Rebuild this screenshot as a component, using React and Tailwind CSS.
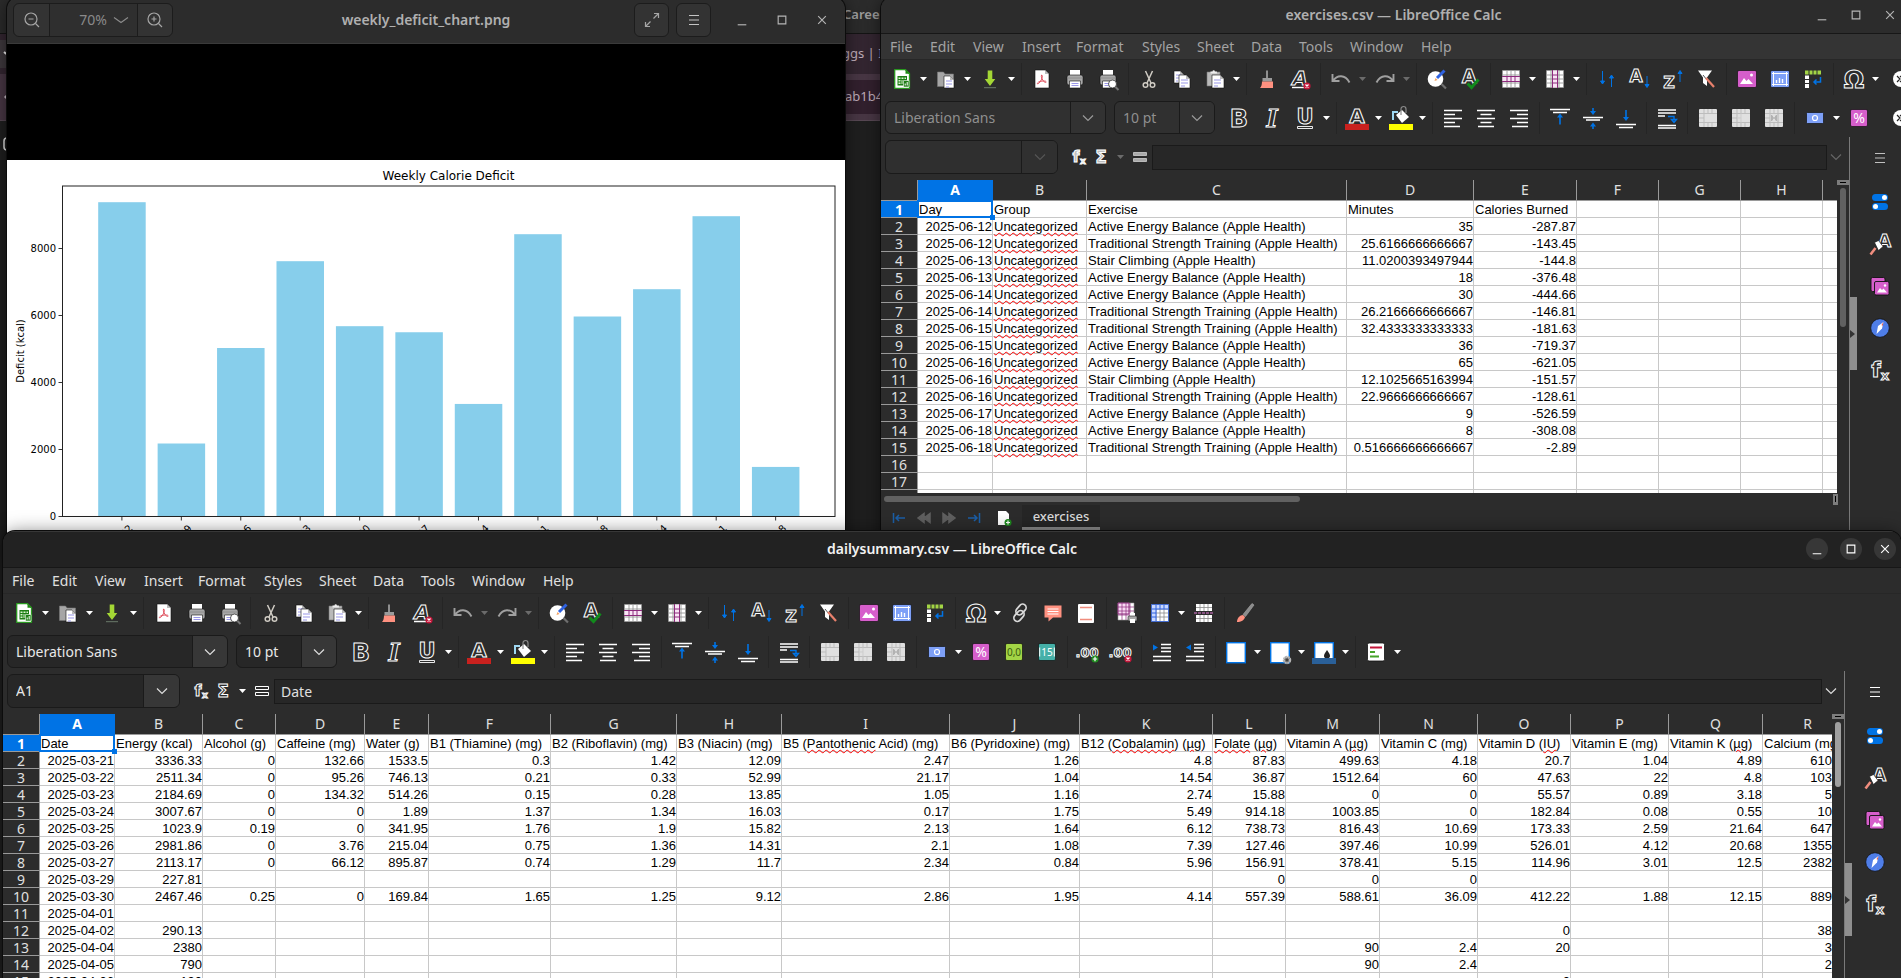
import React from 'react';
import clsx from 'clsx';

const UI = "font-['Noto_Sans',sans-serif]";

/* ---------- icons ---------- */

// hollow letter used by most of the text tools
function Letter({ x = 12, y = 20, size = 22, fill = '#2c2c2c', italic, serif, children }) {
  return (
    <text
      x={x}
      y={y}
      fontSize={size}
      textAnchor="middle"
      fontWeight="700"
      fontStyle={italic ? 'italic' : 'normal'}
      fill={fill}
      stroke="#fff"
      strokeWidth="1"
      className={serif ? "font-['DejaVu_Serif',serif]" : "font-['DejaVu_Sans',sans-serif]"}
    >
      {children}
    </text>
  );
}

const page = (x, y, w, h) => (
  <g>
    <path d={`M${x} ${y}h${w - 4}l4 4v${h - 4}h-${w}z`} fill="#fff" stroke="#111" strokeWidth=".6" />
    <path d={`M${x + w - 4} ${y}v4h4z`} fill="#bbb" />
  </g>
);

const textLines = (x, y, w) => (
  <path d={`M${x} ${y}h${w}M${x} ${y + 3}h${w}M${x} ${y + 6}h${w - 3}`} stroke="#9a97e8" strokeWidth="1.2" />
);

const badge = (kind) => (
  <g>
    <circle cx="19" cy="19" r="3.6" fill={kind === 'plus' ? '#1f8b1f' : '#c4163a'} />
    <path
      d={kind === 'plus' ? 'M16.8 19h4.4M19 16.8v4.4' : 'M17.5 17.5l3 3M20.5 17.5l-3 3'}
      stroke="#fff"
      strokeWidth="1.2"
    />
  </g>
);

const whiteGrid = (
  <g>
    <rect x="3" y="3" width="18" height="18" rx="1" fill="#999" />
    <path d="M4 4h16v16H4z" fill="#fff" />
    <path d="M8 4v16M12 4v16M16 4v16M4 8h16M4 12h16M4 16h16" stroke="#8a8a8a" strokeWidth=".8" />
  </g>
);

const printer = (
  <g>
    <path d="M7 3h10v6H7z" fill="#fff" />
    <rect x="4" y="8" width="16" height="10" rx="2" fill="#a9a9a9" stroke="#111" strokeWidth=".6" />
    <path d="M4 11h16" stroke="#888" strokeWidth=".8" />
    <path d="M6.5 14h11v7h-11z" fill="#fff" stroke="#111" strokeWidth=".6" />
    <path d="M8.5 16.5h7M8.5 18.5h7" stroke="#9a97e8" strokeWidth="1.2" />
  </g>
);

const mergeGrid = (inner) => (
  <g>
    <rect x="3" y="3" width="18" height="18" rx="1" fill="#e0e0e0" />
    <path d="M3 7.5h18M3 16.5h18M8 3v18M12 3v4.5M16 3v4.5M12 16.5V21M16 16.5V21M3 12h5" stroke="#bdbdbd" />
    {inner}
  </g>
);

const upArrow = 'M12 7.5l3 4h-2.2v7h-1.6v-7H9z';

const ICONS = {
  new: (
    <g>
      <path d="M4.7 2.7h10.8l4 4v14.6H4.7z" fill="#fff" stroke="#2a9a20" strokeWidth="1.3" strokeLinejoin="round" />
      <path d="M15.5 2.7v4h4z" fill="#1d8a12" />
      <path d="M7.5 9h9.5v9.5H7.5z" fill="#1d7d14" />
      <path d="M8.5 10.5h2V12h-2zM11.5 10.5h2V12h-2zM14.5 10.5H16V12h-1.5zM8.5 13h2v1.5h-2zM8.5 15.5h2V17h-2zM11.5 13h1v4h-1z" fill="#d9f5d0" />
      <path d="M13.5 13.5H19V20h-5.5z" fill="#1d7d14" stroke="#fff" strokeWidth=".6" />
      <path d="M15.2 18.5v-2M17.2 18.5V15" stroke="#fff" />
    </g>
  ),
  open: (
    <g>
      <path d="M3.5 5h6L11 7h8.5v12.5h-16z" fill="#a6a6a6" stroke="#777" strokeWidth=".6" />
      {page(10, 9, 10, 12)}
      {textLines(12, 14, 6)}
    </g>
  ),
  save: (
    <g>
      <path d="M9.7 3.5h4.6V12h3L12 19l-5.300-7h3z" fill="#a4d735" />
      <path d="M6 20.7h12" stroke="#6a7a6a" />
    </g>
  ),
  pdf: (
    <g>
      {page(5, 3, 14, 18)}
      <path d="M11.5 8c1.5 0 .8 4-1.5 7-1.5 2-3 2.500-2.500 1 .8-1.500 5-2.500 8-1.800 1.500.8.5 1.800-1 .8-2-1.200-3.800-5.500-3-7z" fill="none" stroke="#e0525f" />
    </g>
  ),
  print: printer,
  preview: (
    <g>
      {printer}
      <circle cx="16.5" cy="17" r="4" fill="#fff" stroke="#333" strokeWidth=".8" />
      <path d="M19.5 20l3 3" stroke="#777" strokeWidth="2" />
    </g>
  ),
  cut: (
    <g fill="none" stroke="#d0ccc4" strokeWidth="1.5">
      <path d="M8.5 4L14 16M15.5 4L10 16" />
      <circle cx="8.5" cy="18" r="2.3" />
      <circle cx="15.5" cy="18" r="2.3" />
    </g>
  ),
  copy: (
    <g>
      {page(4, 4, 10, 12)}
      {textLines(6, 8, 5)}
      {page(9, 8, 11, 13)}
      {textLines(11, 13, 7)}
    </g>
  ),
  paste: (
    <g>
      <path d="M4 5h13v14H4z" fill="#b9b9b9" stroke="#777" strokeWidth=".6" />
      <path d="M7.5 6.5v-2h2a1.2 1.2 0 012.4 0h2v2z" fill="#eee" />
      {page(9, 8, 12, 13)}
      {textLines(11, 13, 7)}
    </g>
  ),
  clone: (
    <g>
      <path d="M12 3.5v8" stroke="#8f8f8f" strokeWidth="2" />
      <path d="M7.5 11H17v3.5H7.5z" fill="#9b9b9b" />
      <path d="M7 14.5h11V21H5c1.5-1.5 2-4 2-6.5z" fill="#ff9180" />
    </g>
  ),
  clear: (
    <g>
      <Letter italic size={20} y={18}>A</Letter>
      <path d="M4 20.5h12" stroke="#fff" strokeWidth="1.4" />
      {badge('x')}
    </g>
  ),
  undo: <path d="M3.5 7v7h7M4.2 13.5C8 8 16 7 20.5 15.5" fill="none" stroke="#a0a0a0" strokeWidth="1.9" />,
  redo: <path d="M20.5 7v7h-7M19.8 13.5C16 8 8 7 3.5 15.5" fill="none" stroke="#a0a0a0" strokeWidth="1.9" />,
  find: (
    <g>
      <circle cx="10.5" cy="12" r="7.8" fill="#fff" />
      <path d="M16.5 17l4.5 4.5" stroke="#6f6f6f" strokeWidth="2.2" />
      <path d="M12 11l7.5-7.5" stroke="#2f62e0" strokeWidth="3" />
      <path d="M9.5 14l1-3 2 2z" fill="#f2a15f" />
    </g>
  ),
  spell: (
    <g>
      <Letter size={19} y={16} x={11}>A</Letter>
      <path d="M9.5 16.5l4 4 7-8" fill="none" stroke="#118a1c" strokeWidth="3" />
    </g>
  ),
  row: (
    <g>
      {whiteGrid}
      <path d="M3.5 9.5h17v5h-17z" fill="#f9e4f5" />
      <path d="M3 9.5h18M3 14.5h18M8 9.5v5M12 9.5v5M16 9.5v5" stroke="#8c2a7c" strokeWidth="1" />
    </g>
  ),
  col: (
    <g>
      {whiteGrid}
      <path d="M9.5 3.5h5v17h-5z" fill="#f9e4f5" />
      <path d="M9.5 3v18M14.5 3v18M9.5 8h5M9.5 12h5M9.5 16h5" stroke="#8c2a7c" strokeWidth="1" />
    </g>
  ),
  sort: <path d="M7.5 4v12M5.5 14l2 3 2-3zM16.5 20V9M14.5 11l2-3 2 3z" fill="#0073e5" stroke="#0073e5" strokeWidth="1" />,
  az: (
    <g>
      <Letter size={17} x={8} y={15}>A</Letter>
      <path d="M19 9v10M17 17.5l2 3 2-3z" fill="#0073e5" stroke="#0073e5" strokeWidth="1" />
    </g>
  ),
  za: (
    <g>
      <Letter size={16} x={8} y={21}>Z</Letter>
      <path d="M19 15V5M17 6.5l2-3 2 3z" fill="#0073e5" stroke="#0073e5" strokeWidth="1" />
    </g>
  ),
  filter: (
    <g>
      <path d="M4 3.5h14l-5 7V19l-4-3v-5.5z" fill="#fff" />
      <path d="M9 8l4 5" stroke="#555" />
      <path d="M12 11l8 9" stroke="#e8806c" strokeWidth="2.2" />
    </g>
  ),
  image: (
    <g>
      <rect x="2.5" y="3.5" width="19" height="17" rx="1.5" fill="#d65ecb" stroke="#111" strokeWidth=".7" />
      <path d="M5 17l4-6 2.5 3 2-2 4.5 5z" fill="#fff" />
      <circle cx="16.5" cy="8" r="1.5" fill="#fff" />
    </g>
  ),
  chart: (
    <g>
      <rect x="2.5" y="3.5" width="19" height="17" rx="1.5" fill="#7ea0f7" stroke="#111" strokeWidth=".7" />
      <path d="M5.5 5v14M18.5 5v14M4 6.5h16M4 17.5h16" stroke="#fff" strokeWidth="1" />
      <path d="M8.5 16v-3M11.5 16v-5M14.5 16v-4" stroke="#fff" strokeWidth="1.4" />
    </g>
  ),
  pivot: (
    <g>
      <path d="M4 3.5h16v4H4z" fill="#a3d545" />
      <path d="M8 3v5M12 3v5M16 3v5" stroke="#2c2c2c" />
      <path d="M4 8.5h4V21H4z" fill="#fff" />
      <path d="M4 12.5h4M4 16.5h4" stroke="#2c2c2c" />
      <path d="M19.5 10v5h-6M15.5 12.5L13 15l2.5 2.5" fill="none" stroke="#0073e5" strokeWidth="1.5" />
    </g>
  ),
  omega: <Letter size={24} y={21}>Ω</Letter>,
  link: (
    <g fill="none" stroke="#d8d8d8" strokeWidth="1.7">
      <rect x="9.5" y="2.5" width="7" height="12" rx="3.5" transform="rotate(40 13 8.5)" />
      <rect x="7.5" y="9" width="7" height="12" rx="3.5" transform="rotate(40 11 15)" />
    </g>
  ),
  comment: (
    <g>
      <path d="M3.5 4.5h17v12H12l-4.500 4v-4h-4z" fill="#ff9180" />
      <path d="M6.5 8h11M6.5 10.5h11M6.5 13h11" stroke="#fff" />
    </g>
  ),
  headfoot: (
    <g>
      <rect x="4" y="3" width="16" height="19" rx="1" fill="#fff" />
      <path d="M6 6.5h12M6 18.5h12" stroke="#f08d7e" strokeWidth="1.7" />
    </g>
  ),
  printarea: (
    <g>
      <path d="M3 2h16v17H3z" fill="#fff" stroke="#999" strokeWidth=".6" />
      <path d="M3 2h11v11H3z" fill="#f7d9f2" stroke="#8c2a7c" />
      <path d="M7 2v17M11 2v17M15 2v17M3 6h16M3 10h16M3 14h16" stroke="#8c2a7c" strokeWidth=".7" />
      <path d="M15 12h5v4h-5z" fill="#fff" />
      <rect x="13" y="15" width="9" height="5" rx="1" fill="#a9a9a9" stroke="#222" strokeWidth=".6" />
      <path d="M15 18h5v4h-5z" fill="#fff" />
    </g>
  ),
  freeze: (
    <g>
      {whiteGrid}
      <path d="M4 4h16v4H4zM4 8h4v12H4z" fill="#c9d8ff" />
      <path d="M8 4v16M12 4v4M16 4v4M4 8h16M4 12h4M4 16h4" stroke="#2f62e0" />
      <path d="M3.5 3.5h17v17h-17z" fill="none" stroke="#2f62e0" strokeWidth=".8" />
    </g>
  ),
  split: (
    <g>
      <path d="M4 3h16v7H4zM4 14h16v7H4z" fill="#fff" />
      <path d="M8 3v7M12 3v7M16 3v7M4 6.5h16M8 14v7M12 14v7M16 14v7M4 17.5h16" stroke="#888" strokeWidth=".8" />
      <path d="M2 12h20" stroke="#e27ad6" strokeWidth="1.2" strokeDasharray="3 1" />
    </g>
  ),
  draw: (
    <g>
      <path d="M10 13.5l9-11 2 1.5-8.500 11.500z" fill="#8c8c8c" stroke="#aaa" strokeWidth=".6" />
      <path d="M4 21c0-4 3-7 6-7l2 2c-.5 3-4 5-8 5z" fill="#ff9180" />
    </g>
  ),
  bold: <Letter size={24} y={21}>B</Letter>,
  italic: <Letter size={24} y={21} italic serif>I</Letter>,
  underline: (
    <g>
      <Letter size={21} y={18}>U</Letter>
      <path d="M4.5 20.5h15v2h-15z" fill="#2c2c2c" stroke="#fff" strokeWidth=".9" />
    </g>
  ),
  fontcolor: (
    <g>
      <Letter size={20} y={17}>A</Letter>
      <path d="M0 18h24v6H0z" fill="#c9211e" />
    </g>
  ),
  highlight: (
    <g>
      <path d="M4 14V6h5" fill="none" stroke="#9fd8f2" strokeWidth="2" />
      <path d="M7 9l6-5 7 7-7 6z" fill="#fff" />
      <path d="M12 9V3a2.5 2.5 0 015 0v4" fill="none" stroke="#8a8a8a" strokeWidth="1.2" />
      <path d="M0 18h24v6H0z" fill="#ffff00" />
    </g>
  ),
  left: <path d="M3 4.5h18M3 8.5h11M3 12.5h18M3 16.5h11M3 20.5h16" stroke="#fff" strokeWidth="1.3" />,
  center: <path d="M3 4.5h18M6.5 8.5h11M3 12.5h18M6.5 16.5h11M4 20.5h16" stroke="#fff" strokeWidth="1.3" />,
  right: <path d="M3 4.5h18M10 8.5h11M3 12.5h18M10 16.5h11M5 20.5h16" stroke="#fff" strokeWidth="1.3" />,
  top: (
    <g>
      <path d="M2 3.5h20M5 6.5h14" stroke="#fff" strokeWidth="1.3" />
      <path d={upArrow} fill="#0073e5" />
    </g>
  ),
  middle: (
    <g>
      <path d="M2 11.5h20M5 14h14" stroke="#fff" strokeWidth="1.3" />
      <path d="M11.2 2h1.6v3H15l-3 4-3-4h2.200zM11.200 23h1.600v-2.500H15l-3-4-3 4h2.200z" fill="#0073e5" />
    </g>
  ),
  bottom: (
    <g>
      <path d="M2 18.5h20M5 21.5h14" stroke="#fff" strokeWidth="1.3" />
      <path d="M11.2 4h1.6v7H15l-3 4-3-4h2.200z" fill="#0073e5" />
    </g>
  ),
  wrap: (
    <g>
      <path d="M3 4h18M3 7h18M3 10h7M3 19.5h18M3 22h18" stroke="#fff" strokeWidth="1.3" />
      <path d="M13 10.5h6v4M16.5 13.5l2.5 3 2.5-3z" fill="none" stroke="#0073e5" strokeWidth="1.4" />
    </g>
  ),
  merge: mergeGrid(null),
  mergecells: mergeGrid(<path d="M8 12h4M12 7.5v9" stroke="#cdcdcd" />),
  unmerge: mergeGrid(<path d="M16 7.5v9M9.5 9l2 3-2 3zM14.5 9l-2 3 2 3z" stroke="#b2b2b2" fill="#b2b2b2" />),
  currency: (
    <g>
      <rect x="3.5" y="6.5" width="17" height="11" rx="1" fill="#7ea0f7" stroke="#111" strokeWidth=".7" />
      <circle cx="12" cy="12" r="2.5" fill="none" stroke="#fff" strokeWidth="1.2" />
    </g>
  ),
  percent: (
    <g>
      <rect x="3.5" y="3.5" width="17" height="17" rx="1.5" fill="#d65ecb" stroke="#111" strokeWidth=".7" />
      <text x="12" y="17" fontSize="14" textAnchor="middle" fill="#fff">%</text>
    </g>
  ),
  number: (
    <g>
      <rect x="3.5" y="3.5" width="17" height="17" rx="1.5" fill="#a3d545" stroke="#111" strokeWidth=".7" />
      <text x="12" y="16" fontSize="10" textAnchor="middle" fill="#3c5c10">0,0</text>
    </g>
  ),
  date: (
    <g>
      <rect x="3.5" y="3.5" width="17" height="17" rx="1.5" fill="#45b0a8" stroke="#111" strokeWidth=".7" />
      <text x="12" y="16" fontSize="10" textAnchor="middle" fill="#fff">15</text>
      <path d="M4.7 7.5v9M19.3 7.5v9" stroke="#fff" />
    </g>
  ),
  adddec: (
    <g>
      <Letter x={11} y={17} size={13}>.00</Letter>
      {badge('plus')}
    </g>
  ),
  deldec: (
    <g>
      <Letter x={11} y={17} size={13}>.00</Letter>
      {badge('x')}
    </g>
  ),
  indent: (
    <g>
      <path d="M11 4.5h10M11 8h10M11 11.5h10M3 16.5h18M3 20.5h18" stroke="#fff" strokeWidth="1.5" />
      <path d="M3 4.5l5 3-5 3z" fill="#0073e5" />
    </g>
  ),
  outdent: (
    <g>
      <path d="M11 4.5h10M11 8h10M11 11.5h10M3 16.5h18M3 20.5h18" stroke="#fff" strokeWidth="1.5" />
      <path d="M8 4.5l-5 3 5 3z" fill="#0073e5" />
    </g>
  ),
  border: <rect x="2.7" y="2.7" width="18.6" height="20" fill="#fff" stroke="#0073e5" strokeWidth="1.4" />,
  borderstyle: (
    <g>
      <rect x="2.7" y="2.7" width="18.6" height="20" fill="#fff" stroke="#0073e5" strokeWidth="1.4" />
      <circle cx="19" cy="20" r="3" fill="#444" stroke="#b5b5b5" strokeWidth="2.5" strokeDasharray="2 .4" />
    </g>
  ),
  bordercolor: (
    <g>
      <rect x="2.7" y="2.7" width="18.6" height="18.6" fill="#fff" stroke="#0073e5" strokeWidth="1.4" />
      <path d="M15 10c2 3 3 4.500 3 6s-1 2.500-3 2.500-3-1-3-2.500 1-3 3-6z" fill="#222" />
      <path d="M0 18h24v6H0z" fill="#2a6099" />
    </g>
  ),
  cond: (
    <g>
      <rect x="3.5" y="3" width="17" height="18" rx="1.5" fill="#fff" stroke="#111" strokeWidth=".8" />
      <path d="M6 7.5h12" stroke="#c4163a" strokeWidth="2" />
      <path d="M6 12h5M6 16.5h9" stroke="#47a32a" strokeWidth="2" />
    </g>
  ),
  menu: <path d="M7 7.5h10M7 12h10M7 16.5h10" stroke="currentColor" strokeWidth="1.2" />,
  toggles: (
    <g>
      <rect x="4" y="4" width="16" height="7" rx="3.5" fill="#0073e5" />
      <circle cx="16.5" cy="7.5" r="2.5" fill="#fff" />
      <rect x="4" y="13" width="16" height="7" rx="3.5" fill="#0073e5" />
      <circle cx="7.5" cy="16.5" r="2.5" fill="#fff" />
    </g>
  ),
  styles: (
    <g>
      <Letter x={16.5} y={15} size={17}>A</Letter>
      <path d="M6.5 10.5l4-2 4.5 6-4.500 4z" fill="#fff" stroke="#111" strokeWidth=".6" />
      <path d="M7.5 16l-5 6.5" stroke="#f08d7e" strokeWidth="2.6" />
    </g>
  ),
  gallery: (
    <g fill="#d65ecb" stroke="#111" strokeWidth=".9">
      <rect x="3" y="3.5" width="14" height="14" rx="1.5" />
      <rect x="6.5" y="7.5" width="14.5" height="13.5" rx="1.5" />
      <path d="M9 18.5l3-4.500 2 2 1.500-1.500 3.500 4z" fill="#fff" stroke="none" />
      <circle cx="17" cy="11.5" r="1.2" fill="#fff" stroke="none" />
    </g>
  ),
  compass: (
    <g>
      <circle cx="12" cy="12" r="9.3" fill="#4f7ee8" stroke="#111" strokeWidth=".8" />
      <path d="M10 10l5.500-4L14 12.500 8.500 18z" fill="#fff" />
      <path d="M15.5 6l-2 3 1 1z" fill="#e04a3a" />
    </g>
  ),
  functions: (
    <g>
      <Letter x={8} y={19} size={22}>f</Letter>
      <Letter x={17} y={22} size={13}>x</Letter>
    </g>
  ),
};

function Icon({ name, className = 'w-6 h-6' }) {
  return (
    <svg viewBox="0 0 24 24" className={clsx('shrink-0 overflow-visible', className)} aria-hidden="true">
      {ICONS[name]}
    </svg>
  );
}

function Caret({ dim }) {
  return (
    <svg viewBox="0 0 7 4" className="w-[7px] h-1" aria-hidden="true">
      <path d="M0 0h7L3.5 4z" fill={dim ? '#6b6b6b' : '#fff'} />
    </svg>
  );
}

function Chevron({ className = 'text-[#d0d0d0]' }) {
  return (
    <svg viewBox="0 0 12 8" className={clsx('w-3 h-2', className)} aria-hidden="true">
      <path d="M1 1.5l5 5 5-5" fill="none" stroke="currentColor" strokeWidth="1.2" />
    </svg>
  );
}

/* ---------- toolbars ---------- */

// "+" marks a button with a menu arrow, "|" is a separator
const STANDARD = [
  'new+', 'open+', 'save+', '|', 'pdf', 'print', 'preview', '|', 'cut', 'copy', 'paste+', '|', 'clone', 'clear', '|',
  'undo+', 'redo+', '|', 'find', 'spell', '|', 'row+', 'col+', '|', 'sort', 'az', 'za', 'filter', '|',
  'image', 'chart', 'pivot', '|', 'omega+', 'link', 'comment', 'headfoot', '|', 'printarea', 'freeze+', 'split', '|', 'draw',
];

const FORMATTING = [
  'bold', 'italic', 'underline+', '|', 'fontcolor+', 'highlight+', '|', 'left', 'center', 'right', '|',
  'top', 'middle', 'bottom', '|', 'wrap', '|', 'merge', 'mergecells', 'unmerge', '|',
  'currency+', 'percent', 'number', 'date', '|', 'adddec', 'deldec', '|', 'indent', 'outdent', '|',
  'border+', 'borderstyle+', 'bordercolor+', '|', 'cond+',
];

function Separator() {
  return <span className="w-2 h-8 shrink-0 flex justify-center before:w-px before:h-full before:bg-[#252525]" />;
}

function Tools({ items, last }) {
  const shown = last ? items.slice(0, items.indexOf(last) + 1) : items;
  return (
    <>
      {shown.map((item, i) => {
        if (item === '|') return <Separator key={i} />;
        const name = item.replace('+', '');
        return (
          <React.Fragment key={i}>
            <button aria-label={name} className="w-[33px] h-8 shrink-0 flex items-center justify-center">
              <Icon name={name} />
            </button>
            {item.endsWith('+') && (
              <button aria-label={`${name} options`} className="w-[11px] h-8 shrink-0 flex items-center justify-center">
                <Caret dim={name === 'undo' || name === 'redo'} />
              </button>
            )}
          </React.Fragment>
        );
      })}
      {last && (
        <button aria-label="More" className="ml-auto w-[13px] h-4 shrink-0">
          <svg viewBox="0 0 16 16" className="w-4 h-4" aria-hidden="true">
            <circle cx="8" cy="8" r="8" fill="#fff" />
            <path d="M4 5l3 3-3 3M7 5l3 3-3 3" fill="none" stroke="#222" strokeWidth="1.2" />
          </svg>
        </button>
      )}
    </>
  );
}

function Combo({ label, value, active, className }) {
  return (
    <div
      className={clsx(
        'relative h-[33px] shrink-0 rounded-md border border-[#1a1a1a] overflow-hidden',
        active ? 'bg-[#272727] text-[#e8e8e8]' : 'bg-[#303030] text-[#8f8f8f]',
        className,
      )}
    >
      <select aria-label={label} className="w-full h-full pl-2 appearance-none bg-transparent text-sm outline-none">
        <option>{value}</option>
      </select>
      <span
        className={clsx(
          'absolute inset-y-0 right-0 w-[35px] border-l border-[#1a1a1a] flex items-center justify-center pointer-events-none',
          active ? 'bg-[#373737]' : 'bg-[#323232]',
        )}
      >
        <Chevron className={active ? 'text-[#dcdcdc]' : 'text-[#9a9a9a]'} />
      </span>
    </div>
  );
}

/* ---------- spreadsheet ---------- */

const MISSPELLED = /(Uncategorized|Pantothenic|Cobalamin|Folate|µg|IU)/;

function CellText({ text }) {
  return text.split(MISSPELLED).map((part, i) =>
    i % 2 ? (
      <span key={i} className="underline decoration-wavy decoration-[#ff0000] decoration-1 underline-offset-1">
        {part}
      </span>
    ) : (
      part
    ),
  );
}

function Sheet({ columns, rows, textColumns = [], paddedColumn }) {
  return (
    <div className="flex-1 min-w-0 overflow-hidden">
      <table className="w-max table-fixed border-separate border-spacing-0 bg-white text-black font-['Liberation_Sans',Arial,sans-serif] text-[13px]">
        <colgroup>
          <col className="w-[37px]" />
          {columns.map(([letter, width]) => (
            <col key={letter} className={width} />
          ))}
        </colgroup>
        <thead className={UI}>
          <tr>
            <th aria-label="Select all" className="h-[21px] p-0 bg-[#2c2c2c] border-r border-b border-[#9a9a9a]" />
            {columns.map(([letter], i) => (
              <th
                key={letter}
                scope="col"
                className={clsx(
                  'h-[21px] p-0 border-r border-b border-[#9a9a9a] text-sm leading-5 text-center',
                  i === 0 ? 'bg-[#0073e5] text-white font-bold border-[#0073e5]' : 'bg-[#2c2c2c] text-[#e0e0e0] font-normal',
                )}
              >
                {letter}
              </th>
            ))}
          </tr>
        </thead>
        <tbody>
          {rows.map((row, r) => (
            <tr key={r}>
              <th
                scope="row"
                className={clsx(
                  UI,
                  'h-[17px] p-0 border-r border-b border-[#9a9a9a] text-sm text-center',
                  r === 0 ? 'bg-[#0073e5] text-white font-bold' : 'bg-[#2c2c2c] text-[#e0e0e0] font-normal',
                )}
              >
                <div className="h-4 leading-[18px]">{r + 1}</div>
              </th>
              {columns.map(([letter], c) => {
                const value = row[c] ?? '';
                const left = r === 0 || textColumns.includes(letter);
                return (
                  <td
                    key={letter}
                    className={clsx(
                      'relative h-[17px] py-0 border-r border-b border-[#c8c8c8] whitespace-nowrap',
                      left ? 'pl-px pr-0 text-left' : 'pl-0 text-right',
                      !left && (letter === paddedColumn ? 'pr-5' : 'pr-0'),
                    )}
                  >
                    <div className="h-4 leading-[18px]">
                      <CellText text={value} />
                    </div>
                    {r === 0 && c === 0 && (
                      <span className="absolute -inset-px border-2 border-[#0073e5] after:absolute after:-right-1 after:-bottom-1 after:w-[5px] after:h-[5px] after:bg-[#0073e5] z-10" />
                    )}
                  </td>
                );
              })}
            </tr>
          ))}
        </tbody>
      </table>
    </div>
  );
}

function WindowButtons({ round, className }) {
  const shapes = [
    ['Minimize', 'M7 16.5h9'],
    ['Maximize', 'M7.5 7.5h8v8h-8z'],
    ['Close', 'M7.5 7.5l8 8M15.5 7.5l-8 8'],
  ];
  return (
    <div className={clsx('flex items-center justify-end', className)}>
      {shapes.map(([label, d]) => (
        <button
          key={label}
          aria-label={label}
          className={clsx('w-[22px] h-[22px] rounded-full', round ? 'bg-[#373737] text-white' : 'text-[#b5b5b5]')}
        >
          <svg viewBox="0 0 23 23" className="w-full h-full" aria-hidden="true">
            <path d={d} fill="none" stroke="currentColor" strokeWidth="1.2" />
          </svg>
        </button>
      ))}
    </div>
  );
}

const MENUS = [
  ['File', 'w-10'],
  ['Edit', 'w-[43px]'],
  ['View', 'w-[49px]'],
  ['Insert', 'w-[54px]'],
  ['Format', 'w-[66px]'],
  ['Styles', 'w-[55px]'],
  ['Sheet', 'w-[54px]'],
  ['Data', 'w-12'],
  ['Tools', 'w-[51px]'],
  ['Window', 'w-[71px]'],
  ['Help', 'w-12'],
];

function CalcWindow({ title, active, cell, formula, sheet, lastStandard, lastFormatting, thumb, handle, footer, className }) {
  return (
    <section
      className={clsx(
        UI,
        'absolute flex flex-col overflow-hidden rounded-t-xl bg-[#2c2c2c] shadow-[0_0_0_1px_#0c0c0c,0_3px_20px_rgba(0,0,0,0.6)]',
        className,
      )}
    >
      <header
        className={clsx(
          'h-[37px] shrink-0 grid grid-cols-[1fr_auto_1fr] items-center pb-px border-b border-b-[#171717] border-t border-t-[#373737]',
          active ? 'bg-[#222222] text-[#f2f2f2]' : 'bg-[#2c2c2c] text-[#b0b0b0]',
        )}
      >
        <h1 className="col-start-2 text-sm font-semibold">{title}</h1>
        <WindowButtons round={active} className="gap-3 pr-[5px]" />
      </header>

      <nav
        className={clsx(
          'h-[26px] shrink-0 flex items-center pl-px border-b border-[#272727] text-sm',
          active ? 'bg-[#2c2c2c] text-[#e0e0e0]' : 'bg-[#343434] text-[#a3a3a3]',
        )}
      >
        {MENUS.map(([label, width]) => (
          <button key={label} className={clsx('pl-2 shrink-0 text-left', width)}>
            {label}
          </button>
        ))}
      </nav>

      <div className="h-[38px] shrink-0 flex items-center pl-1">
        <Tools items={STANDARD} last={lastStandard} />
      </div>
      <div className="h-[39px] shrink-0 flex items-center pl-1">
        <Combo label="Font name" value="Liberation Sans" active={active} className="w-[221px]" />
        <Combo label="Font size" value="10 pt" active={active} className="w-[101px] ml-2" />
        <span className="w-[7px] shrink-0" />
        <Tools items={FORMATTING} last={lastFormatting} />
      </div>

      <div className="flex-1 min-h-0 flex">
        <div className="flex-1 min-w-0 flex flex-col">
          <div className="h-[43px] shrink-0 flex items-center pl-1 pb-[3px]">
            <div
              className={clsx(
                'w-[173px] h-[34px] shrink-0 flex rounded-md border border-[#1a1a1a] overflow-hidden',
                active ? 'bg-[#272727]' : 'bg-[#2f2f2f]',
              )}
            >
              <input
                aria-label="Name box"
                defaultValue={cell}
                className="flex-1 min-w-0 pl-2 bg-transparent text-sm text-[#e8e8e8] outline-none"
              />
              <button
                aria-label="Named ranges"
                className={clsx(
                  'w-9 border-l border-[#1a1a1a] flex items-center justify-center',
                  active ? 'bg-[#373737]' : 'bg-[#303030]',
                )}
              >
                <Chevron className={active ? 'text-[#dcdcdc]' : 'text-[#555]'} />
              </button>
            </div>
            <button aria-label="Function wizard" className="ml-[10px] w-[22px] shrink-0 flex justify-center">
              <svg viewBox="0 0 16 16" className="w-4 h-4 overflow-visible" aria-hidden="true">
                <Letter x={5} y={13} size={16} fill={active ? '#2c2c2c' : '#bbb'}>f</Letter>
                <Letter x={12} y={15} size={9} fill={active ? '#2c2c2c' : '#bbb'}>x</Letter>
              </svg>
            </button>
            <button aria-label="Select function" className="w-[22px] shrink-0 flex justify-center">
              <svg viewBox="0 0 16 16" className="w-4 h-4 overflow-visible" aria-hidden="true">
                <Letter x={8} y={14} size={17} fill={active ? '#2c2c2c' : '#bbb'}>Σ</Letter>
              </svg>
            </button>
            <button aria-label="Function menu" className="w-4 shrink-0 flex justify-center">
              <Caret dim={!active} />
            </button>
            <button aria-label="Formula" className="w-6 shrink-0 flex justify-center">
              <svg viewBox="0 0 16 16" className="w-4 h-4" aria-hidden="true">
                <path
                  d="M1.5 3.5h13v3h-13zM1.5 9.5h13v3h-13z"
                  fill={active ? '#2c2c2c' : '#aaa'}
                  stroke={active ? '#fff' : '#bbb'}
                />
              </svg>
            </button>
            <input
              aria-label="Input line"
              defaultValue={formula}
              className="flex-1 min-w-0 h-[25px] pl-1.5 border border-[#1a1a1a] bg-[#272727] text-sm text-[#e0e0e0] outline-none"
            />
            <button aria-label="Expand formula bar" className="w-[18px] mr-1 shrink-0 flex justify-center">
              <Chevron className={active ? 'text-[#dcdcdc]' : 'text-[#666]'} />
            </button>
          </div>

          <div className="flex-1 min-h-0 flex">
            <Sheet {...sheet} />
            <div className="w-3 shrink-0 flex flex-col items-center bg-[#2c2c2c]">
              <span className="w-full h-[5px] bg-[#7d7d7d] flex items-center justify-center before:w-1.5 before:h-px before:bg-black" />
              <span className={clsx('mt-[3px] w-1.5 rounded-full', active ? 'bg-[#a0a0a0]' : 'bg-[#616161]', thumb)} />
            </div>
          </div>
          {footer}
        </div>

        <aside className="relative w-[57px] shrink-0 border-l border-[#7a7a7a] bg-[#2c2c2c]">
          <button
            aria-label="Hide sidebar"
            className={clsx('absolute left-0 w-[7px] h-[73px] bg-[#8f8f8f] flex items-center', handle)}
          >
            <svg viewBox="0 0 5 8" className="w-[5px] h-2" aria-hidden="true">
              <path d="M0 0l5 4-5 4z" fill="#333" />
            </svg>
          </button>
          <div className="pl-1 pt-[9px] flex flex-col items-center">
            <button aria-label="Sidebar settings" className={active ? 'text-white' : 'text-[#c0c0c0]'}>
              <Icon name="menu" />
            </button>
            <div className="pt-5 flex flex-col gap-[18px]">
              {['toggles', 'styles', 'gallery', 'compass', 'functions'].map((name) => (
                <button key={name} aria-label={name} className="h-6">
                  <Icon name={name} />
                </button>
              ))}
            </div>
          </div>
        </aside>
      </div>
    </section>
  );
}

function SheetTabs() {
  const nav = [
    ['First sheet', 'M2.5 3v10M14 8H5M8 5L5 8l3 3', '#1b5fa8', 'none'],
    ['Previous sheet', 'M8 3.5v9L2 8zM14 3.5v9L8 8z', '#606060', '#606060'],
    ['Next sheet', 'M2 3.5v9L8 8zM8 3.5v9L14 8z', '#606060', '#606060'],
    ['Last sheet', 'M13.5 3v10M2 8h9M8 5l3 3-3 3', '#1b5fa8', 'none'],
  ];
  return (
    <div className="shrink-0">
      <div className="h-3 flex justify-between items-center pl-[3px] pr-[11px]">
        <span className="w-[416px] h-1.5 rounded-full bg-[#616161]" />
        <span className="w-[5px] h-[11px] bg-[#7d7d7d] flex justify-center items-center before:w-px before:h-1.5 before:bg-black" />
      </div>
      <div className="h-[25px] flex items-center pl-[5px]">
        {nav.map(([label, d, stroke, fill]) => (
          <button key={label} aria-label={label} className="w-[25px] h-full flex items-center justify-center">
            <svg viewBox="0 0 16 16" className="w-4 h-4" aria-hidden="true">
              <path d={d} stroke={stroke} fill={fill} strokeWidth="1.5" />
            </svg>
          </button>
        ))}
        <button aria-label="Add sheet" className="w-9 h-full flex items-center justify-center">
          <svg viewBox="0 0 16 16" className="w-4 h-4" aria-hidden="true">
            <path d="M2 1h8l3 3v11H2z" fill="#fff" />
            <circle cx="12" cy="12.5" r="3.5" fill="#1f8b1f" />
            <path d="M10 12.5h4M12 10.5v4" stroke="#fff" strokeWidth="1.2" />
          </svg>
        </button>
        <button className="w-[78px] h-full border-b-[3px] border-[#8a8a8a] bg-[#262626] text-[13px] leading-5 font-medium text-[#dcdcdc]">
          exercises
        </button>
      </div>
      <div className="h-7" />
    </div>
  );
}

/* ---------- data ---------- */

const AEB = 'Active Energy Balance (Apple Health)';
const TST = 'Traditional Strength Training (Apple Health)';
const SC = 'Stair Climbing (Apple Health)';
const UN = 'Uncategorized';

const EXERCISES = {
  textColumns: ['B', 'C'],
  columns: [
    ['A', 'w-[75px]'], ['B', 'w-[94px]'], ['C', 'w-[260px]'], ['D', 'w-[127px]'], ['E', 'w-[103px]'],
    ['F', 'w-[82px]'], ['G', 'w-[82px]'], ['H', 'w-[82px]'], ['', 'w-[82px]'],
  ],
  rows: [
    ['Day', 'Group', 'Exercise', 'Minutes', 'Calories Burned'],
    ['2025-06-12', UN, AEB, '35', '-287.87'],
    ['2025-06-12', UN, TST, '25.6166666666667', '-143.45'],
    ['2025-06-13', UN, SC, '11.0200393497944', '-144.8'],
    ['2025-06-13', UN, AEB, '18', '-376.48'],
    ['2025-06-14', UN, AEB, '30', '-444.66'],
    ['2025-06-14', UN, TST, '26.2166666666667', '-146.81'],
    ['2025-06-15', UN, TST, '32.4333333333333', '-181.63'],
    ['2025-06-15', UN, AEB, '36', '-719.37'],
    ['2025-06-16', UN, AEB, '65', '-621.05'],
    ['2025-06-16', UN, SC, '12.1025665163994', '-151.57'],
    ['2025-06-16', UN, TST, '22.9666666666667', '-128.61'],
    ['2025-06-17', UN, AEB, '9', '-526.59'],
    ['2025-06-18', UN, AEB, '8', '-308.08'],
    ['2025-06-18', UN, TST, '0.516666666666667', '-2.89'],
    [], [], [],
  ],
};

const DAILY = {
  paddedColumn: 'R',
  columns: [
    ['A', 'w-[75px]'], ['B', 'w-[88px]'], ['C', 'w-[73px]'], ['D', 'w-[89px]'], ['E', 'w-[64px]'], ['F', 'w-[122px]'],
    ['G', 'w-[126px]'], ['H', 'w-[105px]'], ['I', 'w-[168px]'], ['J', 'w-[130px]'], ['K', 'w-[133px]'], ['L', 'w-[73px]'],
    ['M', 'w-[94px]'], ['N', 'w-[98px]'], ['O', 'w-[93px]'], ['P', 'w-[98px]'], ['Q', 'w-[94px]'], ['R', 'w-[90px]'],
  ],
  rows: [
    ['Date', 'Energy (kcal)', 'Alcohol (g)', 'Caffeine (mg)', 'Water (g)', 'B1 (Thiamine) (mg)', 'B2 (Riboflavin) (mg)', 'B3 (Niacin) (mg)', 'B5 (Pantothenic Acid) (mg)', 'B6 (Pyridoxine) (mg)', 'B12 (Cobalamin) (µg)', 'Folate (µg)', 'Vitamin A (µg)', 'Vitamin C (mg)', 'Vitamin D (IU)', 'Vitamin E (mg)', 'Vitamin K (µg)', 'Calcium (mg)'],
    ['2025-03-21', '3336.33', '0', '132.66', '1533.5', '0.3', '1.42', '12.09', '2.47', '1.26', '4.8', '87.83', '499.63', '4.18', '20.7', '1.04', '4.89', '610'],
    ['2025-03-22', '2511.34', '0', '95.26', '746.13', '0.21', '0.33', '52.99', '21.17', '1.04', '14.54', '36.87', '1512.64', '60', '47.63', '22', '4.8', '103'],
    ['2025-03-23', '2184.69', '0', '134.32', '514.26', '0.15', '0.28', '13.85', '1.05', '1.16', '2.74', '15.88', '0', '0', '55.57', '0.89', '3.18', '5'],
    ['2025-03-24', '3007.67', '0', '0', '1.89', '1.37', '1.34', '16.03', '0.17', '1.75', '5.49', '914.18', '1003.85', '0', '182.84', '0.08', '0.55', '10'],
    ['2025-03-25', '1023.9', '0.19', '0', '341.95', '1.76', '1.9', '15.82', '2.13', '1.64', '6.12', '738.73', '816.43', '10.69', '173.33', '2.59', '21.64', '647'],
    ['2025-03-26', '2981.86', '0', '3.76', '215.04', '0.75', '1.36', '14.31', '2.1', '1.08', '7.39', '127.46', '397.46', '10.99', '526.01', '4.12', '20.68', '1355'],
    ['2025-03-27', '2113.17', '0', '66.12', '895.87', '0.74', '1.29', '11.7', '2.34', '0.84', '5.96', '156.91', '378.41', '5.15', '114.96', '3.01', '12.5', '2382'],
    ['2025-03-29', '227.81', '', '', '', '', '', '', '', '', '', '0', '0', '0'],
    ['2025-03-30', '2467.46', '0.25', '0', '169.84', '1.65', '1.25', '9.12', '2.86', '1.95', '4.14', '557.39', '588.61', '36.09', '412.22', '1.88', '12.15', '889'],
    ['2025-04-01'],
    ['2025-04-02', '290.13', '', '', '', '', '', '', '', '', '', '', '', '', '0', '', '', '38'],
    ['2025-04-04', '2380', '', '', '', '', '', '', '', '', '', '', '90', '2.4', '20', '', '', '3'],
    ['2025-04-05', '790', '', '', '', '', '', '', '', '', '', '', '90', '2.4', '', '', '', '2'],
    ['2025-04-06', '190', '', '', '', '', '', '', '', '', '', '', '', '', '0'],
  ],
};

const WEEKS = [
  ['04-02', 9382], ['04-09', 2179], ['04-16', 5030], ['04-23', 7621], ['04-30', 5681], ['05-07', 5500],
  ['05-14', 3360], ['05-21', 8427], ['05-28', 5970], ['06-04', 6785], ['06-11', 8964], ['06-18', 1480],
];

/* ---------- image viewer ---------- */

function DeficitChart() {
  const base = 356.5;
  const perKcal = 67 / 2000;
  return (
    <svg
      viewBox="0 0 838 400"
      className="w-full shrink-0 bg-white font-['DejaVu_Sans',sans-serif]"
      role="img"
      aria-label="Weekly Calorie Deficit"
    >
      <text x="441.5" y="20" fontSize="12" textAnchor="middle">Weekly Calorie Deficit</text>
      <text x="17" y="191" fontSize="10" textAnchor="middle" transform="rotate(-90 17 191)">Deficit (kcal)</text>
      {WEEKS.map(([week, kcal], i) => {
        const x = 91.2 + i * 59.43;
        const h = kcal * perKcal;
        return (
          <g key={week}>
            <rect x={x} y={base - h} width="47.5" height={h} fill="#87ceeb" />
            <path d={`M${x + 23.7} ${base}v4`} stroke="#000" strokeWidth=".8" />
            <text x={x + 35} y="369" fontSize="10" textAnchor="end" transform={`rotate(-45 ${x + 35} 369)`}>
              {week}
            </text>
          </g>
        );
      })}
      {[0, 2000, 4000, 6000, 8000].map((v) => (
        <g key={v}>
          <path d={`M51.5 ${base - v * perKcal}h4`} stroke="#000" strokeWidth=".8" />
          <text x="49" y={base - v * perKcal + 3.5} fontSize="10" textAnchor="end">{v}</text>
        </g>
      ))}
      <rect x="55.5" y="26" width="772.5" height={base - 26} fill="none" stroke="#222" strokeWidth="1" />
    </svg>
  );
}

function ImageViewer() {
  return (
    <section
      className={clsx(
        UI,
        'absolute left-[7px] -top-[3px] w-[838px] h-[560px] flex flex-col overflow-hidden rounded-t-xl bg-black shadow-[0_0_0_1px_#0c0c0c,0_3px_20px_rgba(0,0,0,0.6)]',
      )}
    >
      <header className="h-[47px] shrink-0 grid grid-cols-[1fr_auto_1fr] items-center border-b border-[#3a3a3a] bg-[#2c2c2c] text-[#a6a6a6]">
        <div className="ml-1.5 w-[160px] h-[34px] flex rounded-md border border-[#1c1c1c] bg-[#333]">
          <button aria-label="Zoom out" className="w-[35px] flex items-center justify-center">
            <svg viewBox="0 0 16 16" className="w-4 h-4" fill="none" stroke="currentColor" strokeWidth="1.2" aria-hidden="true">
              <path d="M4.5 7h5M11.5 11.5L15 15" />
              <circle cx="7" cy="7" r="6" />
            </svg>
          </button>
          <button className="flex-1 border-x border-[#1c1c1c] bg-[#2f2f2f] flex items-center justify-end pr-2 gap-1.5 text-sm text-[#8a8a8a]">
            70%
            <svg viewBox="0 0 16 8" className="w-4 h-2" aria-hidden="true">
              <path d="M1 1.5l7 5 7-5" fill="none" stroke="currentColor" strokeWidth="1.2" />
            </svg>
          </button>
          <button aria-label="Zoom in" className="w-[34px] flex items-center justify-center">
            <svg viewBox="0 0 16 16" className="w-4 h-4" fill="none" stroke="currentColor" strokeWidth="1.2" aria-hidden="true">
              <path d="M4.5 7h5M7 4.5v5M11.5 11.5L15 15" />
              <circle cx="7" cy="7" r="6" />
            </svg>
          </button>
        </div>
        <h1 className="text-sm font-semibold text-[#b0b0b0]">weekly_deficit_chart.png</h1>
        <div className="flex items-center justify-end">
          <button aria-label="Fullscreen" className="w-[35px] h-[34px] rounded-md border border-[#1c1c1c] bg-[#333] flex items-center justify-center">
            <svg viewBox="0 0 16 16" className="w-4 h-4" fill="none" stroke="currentColor" strokeWidth="1.2" aria-hidden="true">
              <path d="M9.5 6.5l5-5M10 1.5h4.5V6M6.500 9.500l-5 5M1.5 10v4.5H6" />
            </svg>
          </button>
          <button aria-label="Menu" className="ml-[7px] mr-5 w-[35px] h-[34px] rounded-md border border-[#1c1c1c] bg-[#333] text-[#c4c4c4] flex items-center justify-center">
            <Icon name="menu" />
          </button>
          <WindowButtons className="gap-[18px] pr-3" />
        </div>
      </header>
      <div className="h-[116px] shrink-0 bg-black" />
      <DeficitChart />
    </section>
  );
}

// browser left open behind everything, only slivers of it are visible
function BrowserBehind() {
  return (
    <div className={clsx(UI, 'absolute inset-0 flex flex-col bg-[#202020] text-[13px] whitespace-nowrap')} aria-hidden="true">
      <div className="h-[34px] pl-[843px] pb-1 flex items-center bg-[#2c2c2c] border-b border-[#151515] text-[#a0a0a0] font-semibold">Caree</div>
      <div className="h-10 flex items-center bg-[#352732] text-[#c2b0bd]">
        <span className="w-[842px] h-7 shrink-0 bg-[#403a3f] flex items-center">
          <svg viewBox="0 0 12 6" className="w-3 h-1.5 ml-[3px]">
            <path d="M1 1l5 4 5-4" fill="none" stroke="#fff" strokeWidth="2" />
          </svg>
        </span>
        ggs | I
      </div>
      <div className="h-[47px] py-1.5 bg-[#4a3846] border-b border-[#5a4a56]">
        <div className="h-[34px] flex items-center text-[#c2b0bd]">
          <span className="w-[845px] shrink-0">
            <svg viewBox="0 0 12 12" className="w-3 h-3 ml-1">
              <path d="M11 6H1M5 2L1 6l4 4" fill="none" stroke="#d8cbd5" strokeWidth="1.5" />
            </svg>
          </span>
          <span className="flex-1 h-full bg-[#33212f] flex items-center">ab1b4</span>
        </div>
      </div>
      <div className="h-[46px] flex items-center">
        <svg viewBox="0 0 12 14" className="w-3 h-3.5 ml-[3px]">
          <rect x="1" y="1" width="10" height="12" rx="3" fill="none" stroke="#e8e8e8" strokeWidth="1.5" />
        </svg>
      </div>
    </div>
  );
}

export default function App() {
  return (
    <main className="relative h-screen min-h-[600px] overflow-hidden bg-[#202020]">
      <BrowserBehind />
      <ImageViewer />
      <CalcWindow
        title="exercises.csv — LibreOffice Calc"
        cell=""
        formula=""
        sheet={EXERCISES}
        lastStandard="omega+"
        lastFormatting="percent"
        thumb="h-[139px]"
        handle="top-[160px]"
        footer={<SheetTabs />}
        className="left-[881px] -right-[5px] -top-[3px] h-[561px]"
      />
      <CalcWindow
        active
        title="dailysummary.csv — LibreOffice Calc"
        cell="A1"
        formula="Date"
        sheet={DAILY}
        thumb="h-[65px]"
        handle="top-[192px]"
        className="left-[3px] right-0 top-[531px] bottom-0"
      />
    </main>
  );
}
